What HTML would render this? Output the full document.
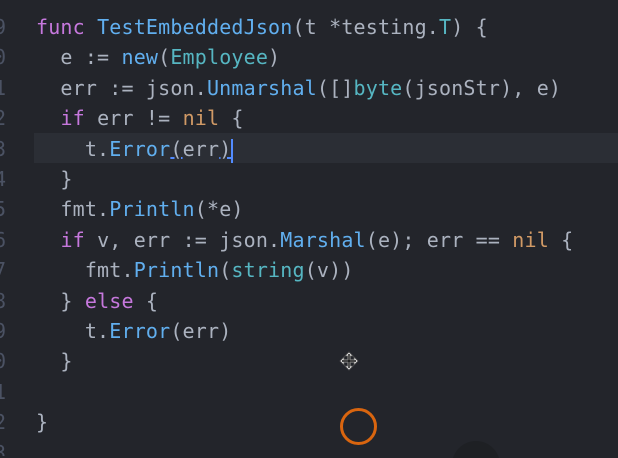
<!DOCTYPE html>
<html><head><meta charset="utf-8"><style>
html,body{margin:0;padding:0;width:618px;height:458px;overflow:hidden;}
body{background:#23252b;position:relative;
font-family:"DejaVu Sans Mono","Liberation Mono",monospace;font-size:20px;letter-spacing:0.17px;color:#abb2bf;}
.l{position:absolute;left:36px;height:30px;line-height:30px;white-space:pre;margin-top:2px;}
.n{position:absolute;left:-6px;height:30px;line-height:30px;color:#4b5263;margin-top:2px;}
.k{color:#c678dd}.f{color:#61afef}.t{color:#56b6c2}.o{color:#d19a66}
.hl{position:absolute;left:34px;top:133px;width:584px;height:30px;background:#2b2e35;}
</style></head><body>
<div class="hl"></div>
<div class="n" style="top:-20px;height:20px;overflow:hidden;line-height:10px">8</div>
<div class="n" style="top:10px">9</div>
<div class="n" style="top:40px">0</div>
<div class="n" style="top:71px">1</div>
<div class="n" style="top:101px">2</div>
<div class="n" style="top:132px">3</div>
<div class="n" style="top:162px">4</div>
<div class="n" style="top:192px">5</div>
<div class="n" style="top:223px">6</div>
<div class="n" style="top:253px">7</div>
<div class="n" style="top:284px">8</div>
<div class="n" style="top:314px">9</div>
<div class="n" style="top:344px">0</div>
<div class="n" style="top:375px">1</div>
<div class="n" style="top:405px">2</div>
<div class="n" style="top:436px;height:18px;overflow:hidden">3</div>
<div class="l" style="top:10px"><span class="k">func</span> <span class="f">TestEmbeddedJson</span>(t *testing.<span class="t">T</span>) {</div>
<div class="l" style="top:40px">  e := <span class="f">new</span>(<span class="t">Employee</span>)</div>
<div class="l" style="top:71px">  err := json.<span class="f">Unmarshal</span>([]<span class="t">byte</span>(jsonStr), e)</div>
<div class="l" style="top:101px">  <span class="k">if</span> err != <span class="o">nil</span> {</div>
<div class="l" style="top:132px">    t.<span class="f">Error</span><span style="text-decoration:underline;text-decoration-color:#528bff">(</span>err<span style="text-decoration:underline;text-decoration-color:#528bff">)</span><span style="display:inline-block;width:2px;height:24px;background:#528bff;vertical-align:middle"></span></div>
<div class="l" style="top:162px">  }</div>
<div class="l" style="top:192px">  fmt.<span class="f">Println</span>(*e)</div>
<div class="l" style="top:223px">  <span class="k">if</span> v, err := json.<span class="f">Marshal</span>(e); err == <span class="o">nil</span> {</div>
<div class="l" style="top:253px">    fmt.<span class="f">Println</span>(<span class="t">string</span>(v))</div>
<div class="l" style="top:284px">  } <span class="k">else</span> {</div>
<div class="l" style="top:314px">    t.<span class="f">Error</span>(err)</div>
<div class="l" style="top:344px">  }</div>
<div class="l" style="top:405px">}</div>
<svg style="position:absolute;left:339px;top:351px" width="20" height="20" viewBox="0 0 20 20">
<path d="M10 1 L14 5 L11.5 5 L11.5 8.5 L15 8.5 L15 6 L19 10 L15 14 L15 11.5 L11.5 11.5 L11.5 15 L14 15 L10 19 L6 15 L8.5 15 L8.5 11.5 L5 11.5 L5 14 L1 10 L5 6 L5 8.5 L8.5 8.5 L8.5 5 L6 5 Z" fill="#e6e6e6" stroke="#555" stroke-width="0.8"/>
<path d="M10 3 V17 M3 10 H17" stroke="#111" stroke-width="1.4"/>
</svg>
<div style="position:absolute;left:340px;top:408px;width:37px;height:37px;border:3px solid #d9650f;border-radius:50%;box-sizing:border-box"></div>
<div style="position:absolute;left:452px;top:441px;width:48px;height:17px;overflow:hidden"><div style="width:48px;height:48px;border-radius:50%;background:#1e2024"></div></div>
</body></html>
